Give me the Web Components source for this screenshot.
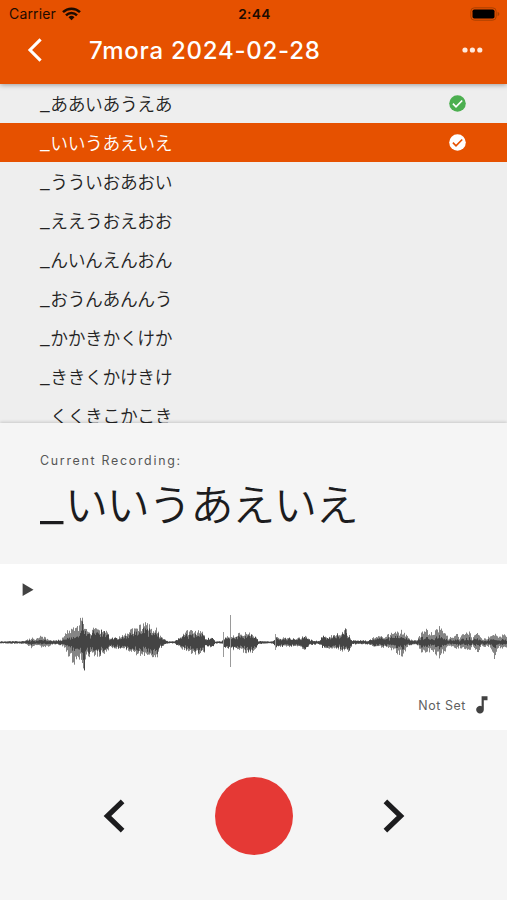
<!DOCTYPE html>
<html lang="ja">
<head>
<meta charset="utf-8">
<title>7mora</title>
<style>
html,body{margin:0;height:100%}
body{font-family:Inter,"Noto Sans CJK JP",sans-serif;background:#f5f5f5;color:#1c1c1e;overflow:hidden}
</style>
</head>
<body>
<recorder-app></recorder-app>
<script>
const define = (name, html, setup) => customElements.define(name, class extends HTMLElement {
  connectedCallback() {
    if (this.shadowRoot) return;
    this.attachShadow({ mode: 'open' }).innerHTML = html;
    if (setup) setup(this);
  }
});

define('status-bar', `<style>
:host{display:grid;grid-template-columns:1fr auto 1fr;align-items:center;height:27px;padding:0 7px 0 9px;color:#1d0b00;font-size:14px;box-sizing:border-box}
.l{display:flex;align-items:center;gap:6px;letter-spacing:.15px}
.t{font-weight:600;font-size:13.7px;letter-spacing:.35px}
.r{justify-self:end;display:flex}
svg{display:block}
</style>
<div class="l"><span>Carrier</span>
<svg width="19" height="14" viewBox="0 0 19 14"><g fill="none" stroke="currentColor" stroke-width="2.5"><path d="M1 5.1a12.2 12.2 0 0 1 17 0"/><path d="M4 8.3a7.8 7.8 0 0 1 11 0"/></g><path d="M6.5 10.3a4.3 4.3 0 0 1 6 0l-3 3z" fill="currentColor"/></svg></div>
<span class="t">2:44</span>
<div class="r"><svg width="30" height="14" viewBox="0 0 30 14"><rect x=".8" y=".8" width="25.4" height="12.4" rx="3.6" fill="none" stroke="#a94000"/><rect x="2.5" y="2.5" width="22" height="9" rx="1.8" fill="#000"/><path d="M27.6 4.8q1.8 1 1.8 2.2t-1.8 2.2z" fill="#a94000"/></svg></div>`);

define('nav-bar', `<style>
:host{display:flex;align-items:center;height:46px;padding:0 24px 0 27px;color:#fff;box-sizing:border-box}
h1{margin:0 auto 0 46px;padding-top:1px;font-size:24px;line-height:30px;font-weight:500;letter-spacing:.75px;white-space:nowrap}
svg{display:block}
</style>
<svg width="16" height="26" viewBox="0 0 16 26"><path d="M13.6 2.4 3 13l10.6 10.6" fill="none" stroke="#fff" stroke-width="3.1"/></svg>
<h1><slot></slot></h1>
<svg width="21" height="6" viewBox="0 0 21 6" fill="#ffe9dc"><circle cx="3" cy="3" r="2.6"/><circle cx="10.4" cy="3" r="2.6"/><circle cx="17.8" cy="3" r="2.6"/></svg>`);

define('check-badge', `<style>:host{display:block;width:17px;height:17px}svg{display:block}</style>
<svg width="17" height="17" viewBox="0 0 17 17"><circle cx="8.5" cy="8.5" r="8.3" fill="var(--disc)"/><path d="m3.9 8.7 3.1 3.1 6.2-6.3" fill="none" stroke="var(--tick)" stroke-width="1.7"/></svg>`);

// A prompt's leading underscore is wider than the font's own, so it has its own box and size.
define('prompt-text', `<style>
:host{display:flex;align-items:baseline;white-space:nowrap;font-family:"Noto Sans CJK JP",sans-serif;font-weight:350}
.lead{width:.582em;flex:none;letter-spacing:0}
.lead span{font-family:Inter,sans-serif;font-size:1.22em;line-height:0;font-weight:300}
</style><div class="lead"><span>_</span></div><div><slot></slot></div>`);

define('prompt-row', `<style>
:host{display:flex;align-items:center;justify-content:space-between;height:39.1px;padding:0 41px 0 40px;box-sizing:border-box;font-size:17.8px;line-height:26px;letter-spacing:-.4px;color:#222;--disc:#4caf50;--tick:#fff}
:host([selected]){background:#e65100;color:#fff;--disc:#fff;--tick:#e65100}
prompt-text{padding-bottom:2px}
check-badge{display:none}
:host([done]) check-badge{display:block}
</style><prompt-text><slot></slot></prompt-text><check-badge></check-badge>`);

define('current-prompt', `<style>
:host{display:block;height:141px;box-sizing:border-box;padding:29px 40px 0;background:#f5f5f5;box-shadow:0 -1px 3px rgba(0,0,0,.16)}
.label{font-size:12.4px;line-height:18px;letter-spacing:1.72px;color:#555}
prompt-text{font-size:43px;line-height:60px;letter-spacing:-1.2px;color:#1c1c1e;margin-top:2px}
</style><div class="label">Current Recording:</div><prompt-text><slot></slot></prompt-text>`);

define('wave-form', `<style>:host{display:block;height:70px}svg{display:block}</style>
<svg width="507" height="70" viewBox="0 0 507 70"><path id="soft" stroke="#858585" fill="none"/><path id="core" stroke="#444" fill="none"/><path id="spikes" stroke="#9a9a9a" fill="none"/></svg>`, el => {
  // Envelope samples: x, peak above the axis, peak below the axis, solid share.
  const env = [[0,1,1,1],[24,1.2,1.2,1],[27,3,3,.6],[31,5,6,.5],[35,3,3,.5],[41,8,5,.4],[48,3,4,.5],[54,2,2,.8],[61,3,3,.7],[66,11,9,.4],[70,15,18,.4],[74,15,21,.35],[79,20,18,.45],[81,27,18,.6],[82.5,27,24,.8],[84,23,28,.9],[86,13,16,.7],[95,14,14,.75],[103,12,13,.8],[107.5,11,9,.85],[109,5,6,.8],[116,5,6,.8],[122,7,7,.8],[130,13,9,.75],[137,16,16,.65],[146,20,14,.65],[152,14,14,.7],[157,16,17,.65],[159,7,7,.8],[165,3,2,1],[168,1,1,1],[174,1,1,1],[180,7,6,.8],[187,13,11,.7],[195,12,13,.7],[204,11,10,.8],[205,3,3,1],[210,5,5,1],[213,4,4,1],[215,1,1,1],[221,1,1,1],[225,7,6,.9],[235,8,8,.8],[243,11,10,.7],[250,9,12,.8],[256,8,8,.8],[258,1.5,1.5,1],[272,1,1,1],[276,5,5,.8],[295,4.5,4.5,.75],[301,5,5,.8],[304.5,9,9,.9],[309,3,3,1],[318,1.5,1.5,1],[324,8,7,.9],[328,6,6,.8],[338,10,7,.75],[345,14,11,.8],[349,8,10,.85],[352,2,2,1],[368,2,2,1],[372,5,4,.75],[385,7,6,.65],[390,9,8,.5],[402,13,14,.5],[407,7,5,.5],[410,3,3,.8],[417,3,3,.7],[421,10,10,.45],[425,14,10,.45],[432,9,10,.35],[439,18,15,.4],[444,12,10,.35],[448,5,5,.5],[456,10,7,.35],[459,5,5,.45],[468,13,10,.35],[472,4,4,.5],[478,12,13,.35],[481,4,4,.5],[490,6,5,.45],[494,12,17,.35],[498,8,6,.4],[507,8,8,.35]];
  let seed = 11, i = 0, soft = '', core = '';
  const rnd = () => (seed = (seed * 16807) % 2147483647) / 2147483647;
  const axis = 34.4;
  for (let x = 0; x < 507; x++) {
    while (i < env.length - 2 && env[i + 1][0] <= x) i++;
    const a = env[i], b = env[i + 1], t = (x - a[0]) / (b[0] - a[0]);
    const v = k => a[k] + (b[k] - a[k]) * t;
    const u = v(1) * (.55 + .52 * rnd()), d = v(2) * (.55 + .52 * rnd()), s = v(3);
    const cu = Math.min(u, Math.max(.8, u * s * (.65 + .6 * rnd()))), cd = Math.min(d, Math.max(.8, d * s * (.65 + .6 * rnd())));
    soft += `M${x + .5} ${(axis - u).toFixed(1)}V${(axis + d).toFixed(1)}`;
    core += `M${x + .5} ${(axis - cu).toFixed(1)}V${(axis + cd).toFixed(1)}`;
  }
  const q = id => el.shadowRoot.getElementById(id);
  q('soft').setAttribute('d', soft);
  q('core').setAttribute('d', core);
  q('spikes').setAttribute('d', 'M223.5 24V49M230.5 7V59M275.5 26V42');
});

define('audio-panel', `<style>
:host{display:flex;flex-direction:column;height:166px;background:#fff;box-sizing:border-box;padding:19px 0 16px}
svg{display:block}
.play{margin:0 0 11px 22px}
.foot{display:flex;align-items:center;justify-content:flex-end;gap:10px;margin-top:auto;padding-right:19px;color:#606060;font-size:12.4px;letter-spacing:.6px}
</style>
<svg class="play" width="12" height="14" viewBox="0 0 12 14"><path d="M.6.3 11.5 6.7.6 13.1z" fill="#424242"/></svg>
<wave-form></wave-form>
<div class="foot"><span>Not Set</span><svg width="12" height="18" viewBox="0 0 12 18"><path d="M5.6.3h5.9v4H7.8v9.2a3.8 3.8 0 1 1-2.2-3.3z" fill="#424242"/></svg></div>`);

define('record-controls', `<style>
:host{display:flex;align-items:center;justify-content:space-between;height:170px;padding:1px 102px 0 103px;box-sizing:border-box}
.rec{width:78px;height:78px;border-radius:50%;background:#e53935}
svg{display:block}
</style>
<svg width="23" height="34" viewBox="0 0 23 34"><path d="M19.6 2.4 4.4 17l15.2 14.6" fill="none" stroke="#1c1c1e" stroke-width="5.2"/></svg>
<div class="rec"></div>
<svg width="23" height="34" viewBox="0 0 23 34"><path d="M3.4 2.4 18.6 17 3.4 31.6" fill="none" stroke="#1c1c1e" stroke-width="5.2"/></svg>`);

define('recorder-app', `<style>
:host{display:flex;flex-direction:column;width:507px;height:900px;background:#f5f5f5;overflow:hidden}
header{height:84px;flex:none;background:#e65100;box-shadow:0 1px 5px rgba(0,0,0,.35);z-index:1}
main{height:339px;flex:none;overflow:hidden;background:#eee}
current-prompt{z-index:1}
audio-panel{z-index:1}
</style>
<header><status-bar></status-bar><nav-bar>7mora 2024-02-28</nav-bar></header>
<main>
<prompt-row done>ああいあうえあ</prompt-row>
<prompt-row done selected>いいうあえいえ</prompt-row>
<prompt-row>うういおあおい</prompt-row>
<prompt-row>ええうおえおお</prompt-row>
<prompt-row>んいんえんおん</prompt-row>
<prompt-row>おうんあんんう</prompt-row>
<prompt-row>かかきかくけか</prompt-row>
<prompt-row>ききくかけきけ</prompt-row>
<prompt-row>くくきこかこき</prompt-row>
</main>
<current-prompt>いいうあえいえ</current-prompt>
<audio-panel></audio-panel>
<record-controls></record-controls>`);
</script>
</body>
</html>
